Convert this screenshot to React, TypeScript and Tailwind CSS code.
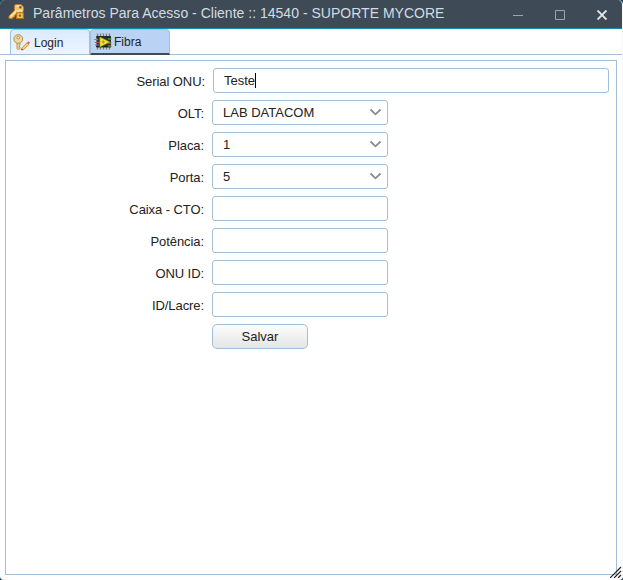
import type { ReactNode } from "react";

function GoldKey() {
  return (
    <svg width="17" height="17" viewBox="0 0 17 17" className="shrink-0">
      <path d="M7.500 1.500H13l2.500 2.500v4L13 9.500H9.500L7 12l-.5 2H5l-.5 1.500H1V13l5.500-5.500V3z" fill="#f3c565" stroke="#c67a24" />
      <path d="M2.500 13.800L8.500 7.500M8.500 3.200h3" stroke="#ffe7a5" strokeWidth="1.300" />
      <rect x="11.200" y="3.300" width="2.200" height="2" fill="#5f5140" />
      <path d="M10 10.200V9q0-1.700 2-1.700T14 9v1.200" fill="none" stroke="#e8e5db" strokeWidth="1.300" />
      <rect x="8.500" y="10" width="7" height="5.500" fill="#efa526" stroke="#b86d16" />
      <path d="M9.500 11.200h5M9.500 14h5" stroke="#ffdd6c" />
      <rect x="11.300" y="11.500" width="1.400" height="2.200" fill="#70420e" />
    </svg>
  );
}

function KeyPencil() {
  return (
    <svg width="18" height="17" viewBox="0 0 18 17" className="shrink-0">
      <path d="M4 8.500v6l1.500 1.500L7 14.500V13l-1-.8 1-.8V8.500z" fill="#ead291" stroke="#b88c3a" strokeWidth=".9" />
      <circle cx="5.300" cy="5" r="4.400" fill="#edd79d" stroke="#bd9248" />
      <circle cx="5.300" cy="3.600" r="1.300" fill="#fff9e8" stroke="#a57b36" strokeWidth=".8" />
      <path d="M8.500 16l.6-2.300L14 8.800l1.800 1.800-5 4.900z" fill="#f6d66a" stroke="#bd8735" strokeWidth=".8" />
      <path d="M14 8.700l1.200-1.200q1.500-.1 1.700 1.300l-1.200 1.500z" fill="#dd6263" />
      <path d="M8.300 16.200l.5-1.700 1.200 1.200z" fill="#47382c" />
    </svg>
  );
}

function FiberChip() {
  return (
    <svg width="19" height="17" viewBox="0 0 19 17" className="shrink-0">
      <rect x="1" y="2" width="17" height="14" fill="#c9d5d4" />
      <path d="M3.500 .5v16M6.500 .5v16M9.500 .5v16M12.500 .5v16M15.500 .5v16" stroke="#777d78" strokeWidth="1.300" />
      <rect x="2.500" y="3" width="14.500" height="11.500" fill="#2b392d" />
      <path d="M2 4h15M2 13.500h15" stroke="#18251d" />
      <path d="M0 6.500h4" stroke="#63a26b" />
      <path d="M1 9.500h5" stroke="#b94e5b" />
      <path d="M1 12h4" stroke="#4e79c3" />
      <path d="M14 6h4M14 10h4M14 13h4" stroke="#69b26c" />
      <path d="M6 4.200v9.600l9.500-4.800z" fill="#f3e834" stroke="#b4a522" strokeWidth=".8" />
      <path d="M7.500 9H11M9.200 7.200v3.500" stroke="#8f8824" strokeWidth=".8" />
    </svg>
  );
}

function Field({ label, children }: { label: string; children?: ReactNode }) {
  return (
    <div className="flex h-[25px] items-center">
      <label className="w-[198px] pt-[2px] text-right leading-4 tracking-[-0.08px]">{label}</label>
      <div className="ml-2 flex h-[25px] w-44 items-center rounded-[3px] border border-[#a2bfd7] bg-white pl-[10px] pr-[5px]">
        {children}
      </div>
    </div>
  );
}

function SelectField({ label, value }: { label: string; value: string }) {
  return (
    <Field label={label}>
      <span className="flex-1 leading-4">{value}</span>
      <svg width="13" height="9" viewBox="0 0 13 9" fill="none">
        <path d="M1.500 1.500L6.500 6.300L11.500 1.500" stroke="#8b8d91" strokeWidth="1.800" />
      </svg>
    </Field>
  );
}

export default function App() {
  return (
    <div className="relative h-[580px] w-[623px] overflow-hidden bg-[#18445c] font-['Liberation_Sans',Arial,sans-serif] text-[13px] text-[#222]">
      <div className="flex h-full flex-col overflow-hidden rounded-tl-[5px] rounded-tr-[5px] rounded-bl-[4px] rounded-br-[4px] border-r border-[#f7f7f7] bg-white">
        <header className="flex h-[29px] shrink-0 items-center border-b border-[#118ca8] bg-[#3e4a55] pl-2">
          <div className="mb-[5px]"><GoldKey /></div>
          <h1 className="ml-2 w-[430px] whitespace-nowrap pb-[3px] text-[14px] leading-4 tracking-[0.015px] text-[#d3dce3]">Parâmetros Para Acesso - Cliente :: 14540 - SUPORTE MYCORE</h1>
          <div className="ml-auto mr-[15px] flex items-center gap-8 pt-[2px]">
            <svg width="10" height="10" viewBox="0 0 10 10"><path d="M0 5.500h10" stroke="#a0a4a7" /></svg>
            <svg width="10" height="10" viewBox="0 0 10 10"><path d="M.5.5h9v9h-9z" fill="none" stroke="#a0a4a7" /></svg>
            <svg width="10" height="10" viewBox="0 0 10 10"><path d="M.5.5l9 9M9.500 .5l-9 9" stroke="#e5e7e8" strokeWidth="1.900" /></svg>
          </div>
        </header>
        <nav className="flex h-[26px] shrink-0 border-b border-[#a2bfd7] text-[12px]">
          <div className="ml-[10px] flex h-[25px] w-20 items-center rounded-t-[4px] border border-b-0 border-[#a2bfd7] bg-gradient-to-b from-[#dceaff] to-[#edf5ff] pl-[2px] pt-px">
            <KeyPencil /><span className="ml-[3px]">Login</span>
          </div>
          <div className="flex h-[26px] w-20 shrink-0 items-center rounded-t-[4px] border border-b-2 border-[#a2bfd7] border-b-[#3e4a55] bg-[#bad3f5] pl-[3px]">
            <FiberChip /><span className="ml-px">Fibra</span>
          </div>
        </nav>
        <main className="ml-[5px] mt-[5px] h-[515px] w-[612px] border border-[#a2bfd7] pt-[7px]">
          <form className="flex flex-col gap-[7px]">
            <div className="flex h-[25px] items-center">
              <label className="w-[199px] pt-[2px] text-right leading-4 tracking-[-0.08px]">Serial ONU:</label>
              <div className="ml-2 flex h-[25px] w-[396px] items-center rounded-[3px] border border-[#a2bfd7] pl-[10px]">
                <span className="leading-4">Teste</span><span className="h-[15px] w-px bg-black" />
              </div>
            </div>
            <SelectField label="OLT:" value="LAB DATACOM" />
            <SelectField label="Placa:" value="1" />
            <SelectField label="Porta:" value="5" />
            <Field label="Caixa - CTO:" />
            <Field label="Potência:" />
            <Field label="ONU ID:" />
            <Field label="ID/Lacre:" />
            <button type="button" className="ml-[206px] h-[25px] w-24 rounded-[5px] border border-[#a2bfd7] bg-gradient-to-b from-[#fcfcfc] to-[#e5e5e5]">Salvar</button>
          </form>
        </main>
      </div>
      <svg className="absolute left-[610px] top-[566px]" width="12" height="12" viewBox="0 0 12 12">
        <path d="M0 12L11 1M4 12L11 5M8 12L11 9" stroke="#222" strokeWidth="1.200" />
      </svg>
    </div>
  );
}
